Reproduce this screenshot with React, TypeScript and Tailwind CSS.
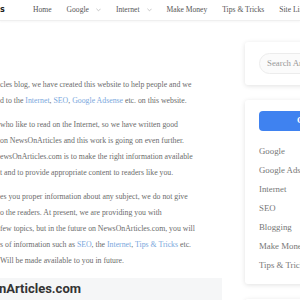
const navItems = [
  { label: 'Home', drop: false },
  { label: 'Google', drop: true },
  { label: 'Internet', drop: true },
  { label: 'Make Money', drop: false },
  { label: 'Tips & Tricks', drop: false },
  { label: 'Site Links', drop: false },
];

const categories = ['Google', 'Google Adsense', 'Internet', 'SEO', 'Blogging', 'Make Money', 'Tips & Tricks'];

const Link = ({ children }: { children: React.ReactNode }) => (
  <span className="text-[#7aa7dd]">{children}</span>
);

const Chevron = () => (
  <svg width="5" height="4" viewBox="0 0 6 4" className="ml-[7px] shrink-0">
    <path d="M0.5 0.5 L3 3 L5.5 0.5" fill="none" stroke="#aaa" strokeWidth="0.8" />
  </svg>
);

export default function App() {
  return (
    <div className="w-[300px] h-[300px] overflow-hidden bg-white font-['Liberation_Serif',serif] text-[#6b6b6b] antialiased">
      <header className="h-[21px] flex items-center border-b border-[#efefef] shadow-[0_1px_2px_rgba(0,0,0,0.04)] whitespace-nowrap">
        <span className="w-[33px] shrink-0 text-[8px] font-bold text-[#222] font-['DejaVu_Sans',sans-serif]">s</span>
        <nav className="flex items-center gap-[15px] text-[7.6px] text-[#555]">
          {navItems.map((n) => (
            <span key={n.label} className="flex items-center shrink-0">
              {n.label}
              {n.drop && <Chevron />}
            </span>
          ))}
        </nav>
      </header>

      <div className="flex gap-[23px]">
        <main className="w-[222px] shrink-0 pt-[56px] text-[7.8px] leading-[16px] whitespace-nowrap">
          <p>cles blog, we have created this website to help people and we</p>
          <p>
            d to the <Link>Internet</Link>, <Link>SEO</Link>, <Link>Google Adsense</Link> etc. on this website.
          </p>
          <div className="mt-[8px]">
            <p>who like to read on the Internet, so we have written good</p>
            <p>on NewsOnArticles and this work is going on even further.</p>
            <p>ewsOnArticles.com is to make the right information available</p>
            <p>t and to provide appropriate content to readers like you.</p>
          </div>
          <div className="mt-[8px]">
            <p>es you proper information about any subject, we do not give</p>
            <p>o the readers. At present, we are providing you with</p>
            <p>few topics, but in the future on NewsOnArticles.com, you will</p>
            <p>
              s of information such as <Link>SEO</Link>, the <Link>Internet</Link>, <Link>Tips &amp; Tricks</Link> etc.
            </p>
            <p>Will be made available to you in future.</p>
          </div>
          <div className="mt-[9px] h-[40px] bg-[#f5f6f7] pt-[1px]">
            <h2 className="font-['Roboto',sans-serif] font-bold text-[13px] leading-[20px] text-[#333] -ml-[1px]">
              nArticles.com
            </h2>
          </div>
        </main>

        <aside className="w-[80px] shrink-0 pt-[21px] flex flex-col gap-[15px] text-[8.8px] whitespace-nowrap">
          <div className="h-[43px] rounded-[3px] bg-white shadow-[0_1px_5px_rgba(0,0,0,0.12)] px-[14px] flex items-center">
            <div className="h-[21px] w-[80px] shrink-0 rounded-full border border-[#ececec] bg-[#fbfbfb] flex items-center px-[7px] text-[#999]">
              Search Articles
            </div>
          </div>
          <div className="h-[184px] rounded-[3px] bg-white shadow-[0_1px_5px_rgba(0,0,0,0.12)] pt-[11px] px-[14px]">
            <div className="h-[20px] w-[90px] rounded-[4px] bg-[#3f82f0] flex items-center pl-[38px] text-white font-bold">
              Categories
            </div>
            <ul className="mt-[11px] text-[#777]">
              {categories.map((c) => (
                <li key={c} className="h-[19px] leading-[19px]">
                  {c}
                </li>
              ))}
            </ul>
          </div>
          <div className="h-[40px] rounded-[3px] bg-white shadow-[0_1px_5px_rgba(0,0,0,0.12)]" />
        </aside>
      </div>
    </div>
  );
}
